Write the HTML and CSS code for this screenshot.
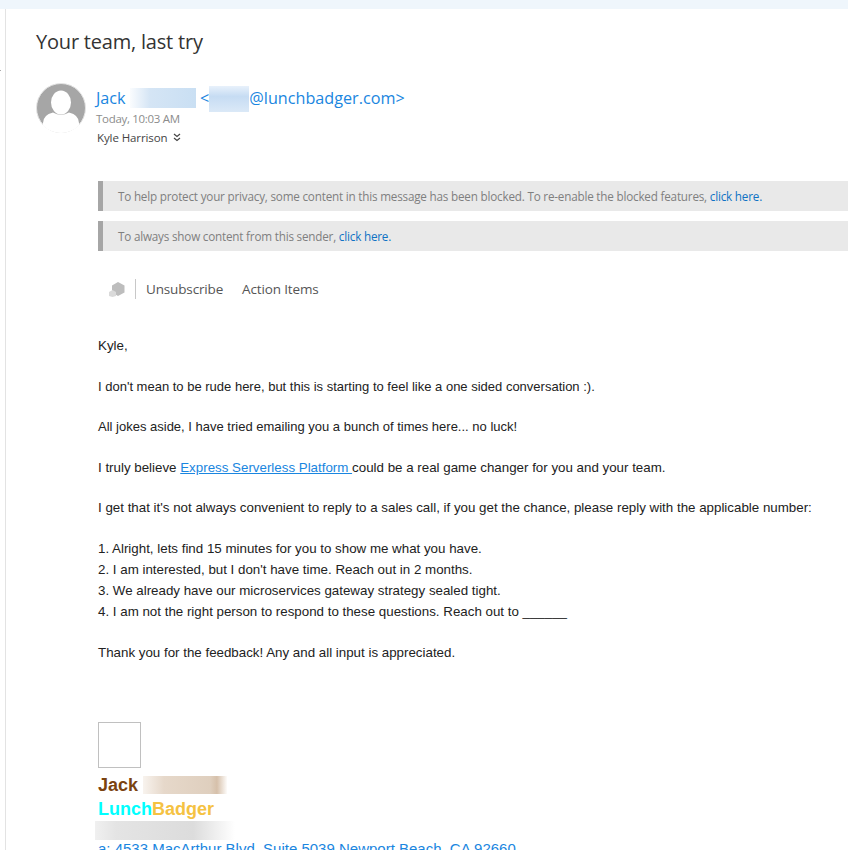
FILE: index.html
```html
<!DOCTYPE html>
<html lang="en">
<head>
    <meta charset="UTF-8">
    <title>Your team, last try</title>
    <link rel="stylesheet" href="styles.css">
</head>
<body>
    <div class="top-bar"></div>
    <div class="shell">
        <div class="side"><i class="side-tick"></i></div>
        <div class="reader">
            <h1 class="subject">Your team, last try</h1>
            <div class="head">
                <svg class="avatar" viewBox="0 0 50 50">
                    <defs><clipPath id="round"><circle cx="25" cy="25" r="25"/></clipPath></defs>
                    <circle cx="25" cy="25" r="24.500" fill="#a6a6a6" stroke="#e4e4e4" stroke-width="1"/>
                    <g clip-path="url(#round)">
                        <path d="M7 50V40Q7 32 17 29.500Q25 34 33 29.500Q43 32 43 40V50z" fill="#fff"/>
                    </g>
                    <ellipse cx="25" cy="19.500" rx="10" ry="12" fill="#fff"/>
                </svg>
                <div class="head-text">
                    <div class="from">Jack <span class="blur blur-name"></span> &lt;<span class="blur blur-mail"></span>@lunchbadger.com&gt;</div>
                    <div class="time">Today, 10:03 AM</div>
                    <div class="to">Kyle Harrison
                        <svg class="chev" viewBox="0 0 8 9"><path d="M1 1l3 2.500L7 1M1 5l3 2.500L7 5" fill="none" stroke="#444" stroke-width="1.200"/></svg>
                    </div>
                </div>
            </div>
            <div class="main">
                <div class="notice">To help protect your privacy, some content in this message has been blocked. To re-enable the blocked features, <a href="#">click here.</a></div>
                <div class="notice">To always show content from this sender, <a href="#">click here.</a></div>
                <div class="actions">
                    <svg class="addin" viewBox="0 0 16 15">
                        <path d="M9 0l6.500 3.500v7L9 14 3 10.500v-7z" fill="#bdbdbd"/>
                        <path d="M3.500 8l3.500 2v4l-3.500 1L0 14v-4z" fill="#dadada"/>
                    </svg>
                    <span class="sep"></span>
                    <span class="act">Unsubscribe</span>
                    <span class="act">Action Items</span>
                </div>
                <div class="body">
                    <p>Kyle,</p>
                    <p class="small">I don't mean to be rude here, but this is starting to feel like a one sided conversation :).</p>
                    <p class="small">All jokes aside, I have tried emailing you a bunch of times here... no luck!</p>
                    <p>I truly believe <a href="#">Express Serverless Platform </a>could be a real game changer for you and your team.</p>
                    <p>I get that it's not always convenient to reply to a sales call, if you get the chance, please reply with the applicable number:</p>
                    <p class="list">1. Alright, lets find 15 minutes for you to show me what you have.<br>
                    2. I am interested, but I don't have time. Reach out in 2 months.<br>
                    3. We already have our microservices gateway strategy sealed tight.<br>
                    4. I am not the right person to respond to these questions. Reach out to ______</p>
                    <p>Thank you for the feedback! Any and all input is appreciated.</p>
                </div>
                <div class="sig">
                    <div class="sig-img"></div>
                    <div class="sig-name">Jack <span class="blur blur-brown"></span></div>
                    <div class="sig-co"><span class="cyan">Lunch</span><span class="gold">Badger</span></div>
                    <div class="blur blur-title"></div>
                    <div class="sig-addr">a: 4533 MacArthur Blvd, Suite 5039 Newport Beach, CA 92660</div>
                </div>
            </div>
        </div>
    </div>
</body>
</html>
```
FILE: styles.css
```css
* {
    padding: 0;
    margin: 0;
    box-sizing: border-box;
}
html, body {
    height: 851px;
    overflow: hidden;
    background-color: #fff;
}
body {
    font-family: "Open Sans", "Noto Sans", sans-serif;
}
a {
    color: #0f72c4;
    text-decoration: none;
}
.top-bar {
    height: 9px;
    background-color: #eff6fc;
}
.shell {
    display: flex;
    height: 841px;
    overflow: hidden;
}
.side {
    flex: 0 0 6px;
    border-right: 1px solid #e3e3e3;
    padding-top: 61px;
}
.side-tick {
    display: block;
    width: 1px;
    height: 1px;
    background-color: #aaa;
}
.reader {
    flex: 1;
    min-width: 0;
    padding: 18px 0 0 30px;
}
.subject {
    font-size: 20px;
    font-weight: 400;
    line-height: 30px;
    letter-spacing: -0.2px;
    color: #333;
}
.head {
    display: flex;
    gap: 10px;
    margin-top: 26px;
}
.avatar {
    flex: 0 0 50px;
    width: 50px;
    height: 50px;
}
.head-text {
    margin-top: 3px;
}
.from {
    font-size: 16.2px;
    line-height: 21px;
    color: #1a86e0;
    white-space: nowrap;
}
.blur {
    display: inline-block;
}
.blur-name {
    width: 66px;
    height: 20px;
    vertical-align: -4px;
    background: linear-gradient(90deg, #fafcfe, #d5e5f5 30%, #c9dff3);
}
.blur-mail {
    width: 40px;
    height: 26px;
    vertical-align: -8px;
    background: linear-gradient(#e8f1fb, #c6dcf3 40%, #dbe9f7);
}
.time {
    font-size: 11.5px;
    line-height: 16px;
    margin-top: -1px;
    letter-spacing: -0.3px;
    color: #8c8c8c;
}
.to {
    font-size: 11.5px;
    line-height: 20px;
    margin-top: 1px;
    margin-left: 1px;
    letter-spacing: -0.1px;
    color: #444;
}
.chev {
    width: 8px;
    height: 9px;
    margin-left: 3px;
}
.main {
    padding: 33px 0 0 62px;
}
.notice {
    height: 30px;
    line-height: 30px;
    margin-bottom: 10px;
    padding-left: 15px;
    border-left: 5px solid #a6a6a6;
    background-color: #e9e9e9;
    color: #7f7f7f;
    font-size: 11.7px;
    letter-spacing: -0.2px;
    white-space: nowrap;
    overflow: hidden;
}
.actions {
    display: flex;
    align-items: center;
    height: 30px;
    margin-top: 23px;
    padding-left: 11px;
    font-size: 13.5px;
    letter-spacing: -0.15px;
    color: #555;
}
.addin {
    width: 16px;
    height: 15px;
}
.sep {
    width: 1px;
    height: 20px;
    margin: 0 10px 0 10px;
    background-color: #c8c8c8;
}
.act {
    margin-right: 19px;
}
.body {
    margin-top: 31px;
    font-family: "Liberation Sans", Arial, sans-serif;
    font-size: 13.33px;
    line-height: 21px;
    color: #222;
}
.body p {
    margin-bottom: 19.5px;
}
.body .small {
    font-size: 13px;
}
.body .list {
    margin-bottom: 20.5px;
}
.body a {
    color: #1a86e0;
    text-decoration: underline;
}
.sig {
    margin-top: 59px;
    font-family: "Liberation Sans", Arial, sans-serif;
}
.sig-img {
    width: 43px;
    height: 46px;
    border: 1px solid #c0c0c0;
}
.sig-name {
    margin-top: 5px;
    font-size: 18px;
    line-height: 24px;
    font-weight: 700;
    color: #7b4310;
}
.blur-brown {
    width: 84px;
    height: 18px;
    vertical-align: -3px;
    background: linear-gradient(90deg, #f8f3ee, #e6d8ca 25%, #dfcfbe 80%, #d6c0aa 88%, #fdfbf9);
}
.sig-co {
    font-size: 18px;
    line-height: 24px;
    font-weight: 700;
}
.cyan {
    color: #00ffff;
}
.gold {
    color: #f5c242;
}
.blur-title {
    display: block;
    width: 140px;
    height: 19px;
    margin-left: -3px;
    background: linear-gradient(90deg, #f0f0f0, #e4e4e4 15%, #dcdcdc 70%, #fff);
}
.sig-addr {
    font-size: 15px;
    line-height: 18px;
    color: #1a86e0;
    white-space: nowrap;
}
```
